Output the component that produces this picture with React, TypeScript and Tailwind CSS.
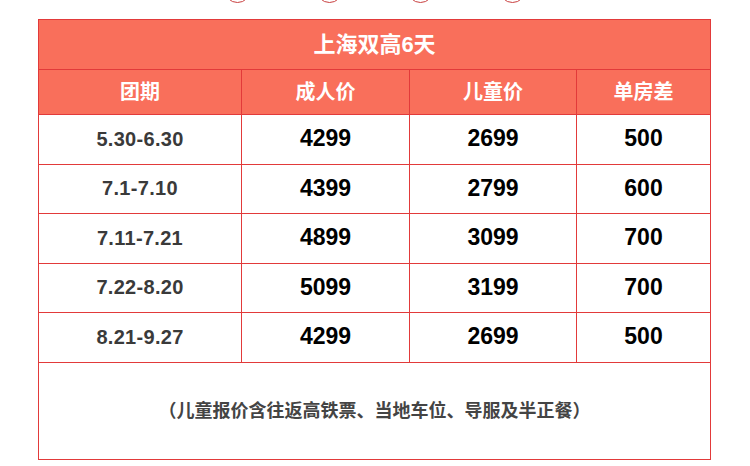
import React from "react";

const rows = [
  { date: "5.30-6.30", adult: "4299", child: "2699", single: "500" },
  { date: "7.1-7.10", adult: "4399", child: "2799", single: "600" },
  { date: "7.11-7.21", adult: "4899", child: "3099", single: "700" },
  { date: "7.22-8.20", adult: "5099", child: "3199", single: "700" },
  { date: "8.21-9.27", adult: "4299", child: "2699", single: "500" },
];

const heights = ["h-[50px]", "h-[49px]", "h-[50px]", "h-[49px]", "h-[50px]"];

const font = "font-['Liberation_Sans','Noto_Sans_CJK_SC',sans-serif]";

function Dots() {
  return (
    <div className="relative h-[19px] w-full">
      {[237, 329, 420, 512].map((x) => (
        <span
          key={x}
          className="absolute top-[-24px] h-[27px] w-[27px] rounded-full border border-[#c94040]"
          style={{ left: x - 13 }}
        />
      ))}
    </div>
  );
}

export default function App() {
  return (
    <div className={`w-[750px] h-[466px] bg-white overflow-hidden ${font}`}>
      <Dots />
      <div className="ml-[38px] w-[673px] border-l border-t border-[#e23a3a]">
        <div className="h-[50px] flex items-center justify-center bg-[#f96f5b] border-r border-b border-[#e23a3a] text-white font-bold text-[22px]">
          上海双高6天
        </div>
        <div className="grid grid-cols-[203px_168px_167px_134px] bg-[#f96f5b] text-white font-bold text-[20px]">
          {["团期", "成人价", "儿童价", "单房差"].map((h) => (
            <div key={h} className="h-[45px] flex items-center justify-center border-r border-b border-[#e23a3a]">
              {h}
            </div>
          ))}
        </div>
        {rows.map((r, i) => (
          <div key={r.date} className={`grid grid-cols-[203px_168px_167px_134px] ${heights[i]}`}>
            <div className="flex items-center justify-center pb-[2px] border-r border-b border-[#e23a3a] text-[20px] font-bold text-[#3a3a3a] tracking-[0.3px]">
              {r.date}
            </div>
            <div className="flex items-center justify-center pb-[2px] border-r border-b border-[#e23a3a] text-[23px] font-bold text-black">
              {r.adult}
            </div>
            <div className="flex items-center justify-center pb-[2px] border-r border-b border-[#e23a3a] text-[23px] font-bold text-black">
              {r.child}
            </div>
            <div className="flex items-center justify-center pb-[2px] border-r border-b border-[#e23a3a] text-[23px] font-bold text-black">
              {r.single}
            </div>
          </div>
        ))}
        <div className="h-[97px] flex items-center justify-center border-r border-b border-[#e23a3a] text-[18px] font-bold text-[#444]">
          （儿童报价含往返高铁票、当地车位、导服及半正餐）
        </div>
      </div>
    </div>
  );
}
